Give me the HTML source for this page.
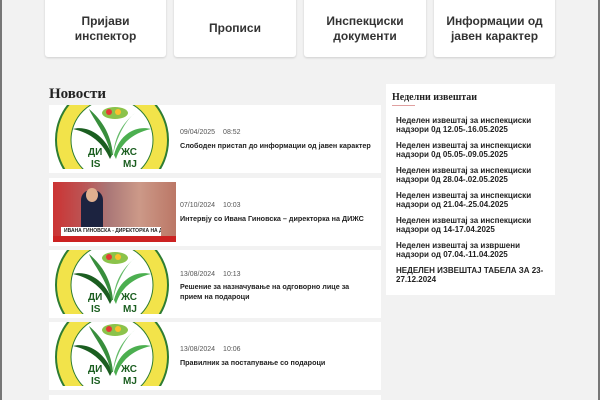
<!DOCTYPE html>
<html><head><meta charset="utf-8"><style>
*{box-sizing:border-box;margin:0;padding:0}
html,body{width:600px;height:400px;overflow:hidden}
body{background:#f2f2f2;font-family:"Liberation Sans",sans-serif;position:relative}
.bl{position:absolute;top:0;width:2px;height:400px;background:#777}
.top{position:absolute;top:-10px;height:67px;background:#fff;border-radius:3px;box-shadow:0 1px 2px rgba(0,0,0,.15);text-align:center;font-weight:bold;font-size:12px;color:#333;line-height:15px;display:flex;align-items:center;justify-content:center}
.top span{padding-top:10px}
.ic{position:absolute;top:0;width:6px;height:6px;background:#999;left:50%;margin-left:-3px;border-radius:1px}
h2{position:absolute;left:49px;top:86px;font-family:"Liberation Serif",serif;font-size:15px;font-weight:bold;color:#222}
.card{position:absolute;left:49px;width:332px;height:68px;background:#fff;overflow:hidden}
.card svg,.card .ph{position:absolute;left:6px;top:0}
.meta{position:absolute;left:131px;font-size:7px;color:#555}
.meta b{font-weight:normal;margin-left:8px}
.tt{position:absolute;left:131px;font-size:7.2px;font-weight:bold;color:#222;line-height:10px;width:180px}
.side{position:absolute;left:386px;top:84px;width:169px;height:211px;background:#fff}
.side h3{position:absolute;left:6px;top:8px;font-family:"Liberation Serif",serif;font-size:10px;font-weight:bold;color:#222}
.side .ul{position:absolute;left:6px;top:21px;width:23px;height:1px;background:#e0a0a0}
.it{position:absolute;left:10px;font-size:8px;font-weight:bold;color:#222;line-height:9px;width:150px}
</style></head><body>
<div class="bl" style="left:0"></div><div class="bl" style="right:0"></div>
<div class="top" style="left:45px;width:121px"><div class="ic"></div><span>Пријави<br>инспектор</span></div>
<div class="top" style="left:174px;width:122px"><div class="ic" style="transform:rotate(45deg);width:10px;height:4px;top:3px"></div><span>Прописи</span></div>
<div class="top" style="left:304px;width:122px"><div class="ic" style="background:none;border:1px solid #999;height:8px;top:-2px"></div><span>Инспекциски<br>документи</span></div>
<div class="top" style="left:434px;width:121px"><div class="ic"></div><span>Информации од<br>јавен карактер</span></div>

<h2>Новости</h2>

<div class="card" style="top:105px">
<svg width="118" height="64" viewBox="0 0 118 64"><rect width="118" height="64" fill="#fff"/><circle cx="57" cy="35" r="56" fill="#f2e34a" stroke="#2e7d32" stroke-width="2"/><circle cx="57" cy="35" r="41" fill="#fff" stroke="#2e7d32" stroke-width="1"/><path d="M57 50 C50 30 32 20 18 24 C36 28 48 38 55 54Z" fill="#1b5e20"/><path d="M59 50 C64 30 80 20 96 24 C78 28 66 38 61 54Z" fill="#4caf50"/><path d="M56 50 C52 30 38 14 34 4 C48 16 56 30 58 50Z" fill="#388e3c"/><path d="M58 50 C62 30 72 14 80 8 C68 18 60 30 58 50Z" fill="#66bb6a"/><ellipse cx="60" cy="8" rx="13" ry="6" fill="#8bc34a"/><circle cx="54" cy="7" r="3" fill="#e53935"/><circle cx="63" cy="7" r="3" fill="#fbc02d"/><text x="33" y="50" font-family="Liberation Sans" font-weight="bold" font-size="10" fill="#1b5e20">ДИ</text><text x="66" y="50" font-family="Liberation Sans" font-weight="bold" font-size="10" fill="#1b5e20">ЖС</text><text x="36" y="62" font-family="Liberation Sans" font-weight="bold" font-size="10" fill="#1b5e20">IS</text><text x="68" y="62" font-family="Liberation Sans" font-weight="bold" font-size="10" fill="#1b5e20">MJ</text></svg>
<div class="meta" style="top:24px">09/04/2025<b>08:52</b></div><div class="tt" style="top:36px;width:200px">Слободен пристап до информации од јавен карактер</div></div>

<div class="card" style="top:178px">
<div class="ph" style="left:4px;top:4px;width:123px;height:60px;background:linear-gradient(90deg,#c33 0%,#b55 25%,#a77 45%,#c98 70%,#b76 100%)"><div style="position:absolute;left:28px;top:8px;width:22px;height:44px;background:#1c2340;border-radius:10px 10px 0 0"></div><div style="position:absolute;left:33px;top:6px;width:12px;height:14px;background:#e0b090;border-radius:50%"></div><div style="position:absolute;left:8px;top:45px;width:100px;height:9px;background:#fff;font-size:5px;font-weight:bold;color:#222;line-height:9px;padding-left:3px;white-space:nowrap;overflow:hidden">ИВАНА ГИНОВСКА - ДИРЕКТОРКА НА ДИЖС</div><div style="position:absolute;left:0;top:54px;width:123px;height:6px;background:#c22"></div></div>
<div class="meta" style="top:24px">07/10/2024<b>10:03</b></div><div class="tt" style="top:36px;width:200px">Интервју со Ивана Гиновска – директорка на ДИЖС</div></div>

<div class="card" style="top:250px">
<svg width="118" height="64" viewBox="0 0 118 64"><rect width="118" height="64" fill="#fff"/><circle cx="57" cy="35" r="56" fill="#f2e34a" stroke="#2e7d32" stroke-width="2"/><circle cx="57" cy="35" r="41" fill="#fff" stroke="#2e7d32" stroke-width="1"/><path d="M57 50 C50 30 32 20 18 24 C36 28 48 38 55 54Z" fill="#1b5e20"/><path d="M59 50 C64 30 80 20 96 24 C78 28 66 38 61 54Z" fill="#4caf50"/><path d="M56 50 C52 30 38 14 34 4 C48 16 56 30 58 50Z" fill="#388e3c"/><path d="M58 50 C62 30 72 14 80 8 C68 18 60 30 58 50Z" fill="#66bb6a"/><ellipse cx="60" cy="8" rx="13" ry="6" fill="#8bc34a"/><circle cx="54" cy="7" r="3" fill="#e53935"/><circle cx="63" cy="7" r="3" fill="#fbc02d"/><text x="33" y="50" font-family="Liberation Sans" font-weight="bold" font-size="10" fill="#1b5e20">ДИ</text><text x="66" y="50" font-family="Liberation Sans" font-weight="bold" font-size="10" fill="#1b5e20">ЖС</text><text x="36" y="62" font-family="Liberation Sans" font-weight="bold" font-size="10" fill="#1b5e20">IS</text><text x="68" y="62" font-family="Liberation Sans" font-weight="bold" font-size="10" fill="#1b5e20">MJ</text></svg>
<div class="meta" style="top:21px">13/08/2024<b>10:13</b></div><div class="tt" style="top:32px">Решение за назначување на одговорно лице за прием на подароци</div></div>

<div class="card" style="top:322px">
<svg width="118" height="64" viewBox="0 0 118 64"><rect width="118" height="64" fill="#fff"/><circle cx="57" cy="35" r="56" fill="#f2e34a" stroke="#2e7d32" stroke-width="2"/><circle cx="57" cy="35" r="41" fill="#fff" stroke="#2e7d32" stroke-width="1"/><path d="M57 50 C50 30 32 20 18 24 C36 28 48 38 55 54Z" fill="#1b5e20"/><path d="M59 50 C64 30 80 20 96 24 C78 28 66 38 61 54Z" fill="#4caf50"/><path d="M56 50 C52 30 38 14 34 4 C48 16 56 30 58 50Z" fill="#388e3c"/><path d="M58 50 C62 30 72 14 80 8 C68 18 60 30 58 50Z" fill="#66bb6a"/><ellipse cx="60" cy="8" rx="13" ry="6" fill="#8bc34a"/><circle cx="54" cy="7" r="3" fill="#e53935"/><circle cx="63" cy="7" r="3" fill="#fbc02d"/><text x="33" y="50" font-family="Liberation Sans" font-weight="bold" font-size="10" fill="#1b5e20">ДИ</text><text x="66" y="50" font-family="Liberation Sans" font-weight="bold" font-size="10" fill="#1b5e20">ЖС</text><text x="36" y="62" font-family="Liberation Sans" font-weight="bold" font-size="10" fill="#1b5e20">IS</text><text x="68" y="62" font-family="Liberation Sans" font-weight="bold" font-size="10" fill="#1b5e20">MJ</text></svg>
<div class="meta" style="top:24px">13/08/2024<b>10:06</b></div><div class="tt" style="top:36px">Правилник за постапување со подароци</div></div>

<div class="card" style="top:395px;height:5px"></div>

<div class="side"><h3>Неделни извештаи</h3><div class="ul"></div>
<div class="it" style="top:32px">Неделен извештај за инспекциски надзори 0д 12.05-.16.05.2025</div>
<div class="it" style="top:57px">Неделен извештај за инспекциски надзори 0д 05.05-.09.05.2025</div>
<div class="it" style="top:82px">Неделен извештај за инспекциски надзори 0д 28.04-.02.05.2025</div>
<div class="it" style="top:107px">Неделен извештај за инспекциски надзори од 21.04-.25.04.2025</div>
<div class="it" style="top:132px">Неделен извештај за инспекциски надзори од 14-17.04.2025</div>
<div class="it" style="top:157px">Неделен извештај за извршени надзори од 07.04.-11.04.2025</div>
<div class="it" style="top:182px">НЕДЕЛЕН ИЗВЕШТАЈ ТАБЕЛА ЗА 23-27.12.2024</div>
</div>
</body></html>
